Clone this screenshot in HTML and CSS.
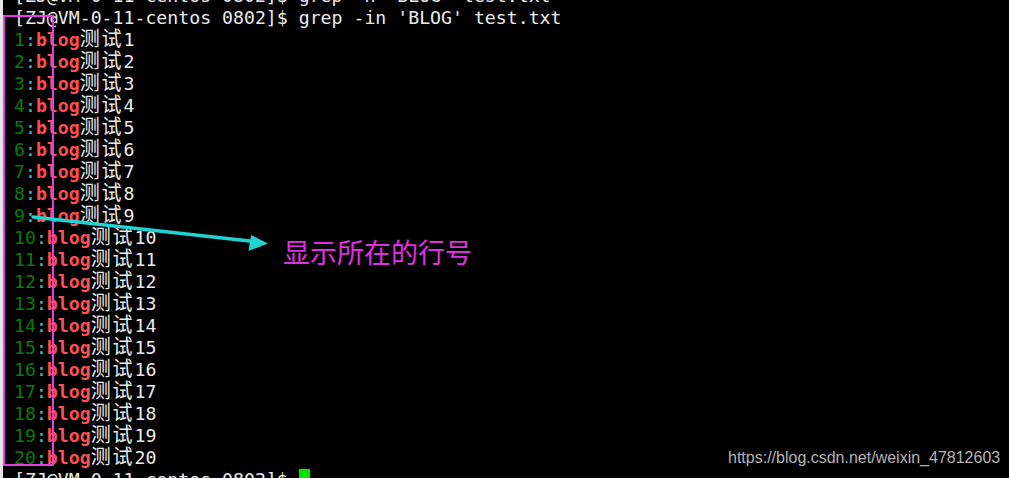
FILE: index.html
```html
<!DOCTYPE html>
<html lang="zh-CN">
<head>
<meta charset="utf-8">
<title>grep -in</title>
<link rel="stylesheet" href="styles.css">
</head>
<body>
<div class="screen">
  <div class="term">
    <div class="line">[ZJ@VM-0-11-centos 0802]$ grep -n 'BLOG' test.txt</div>
    <div class="line">[ZJ@VM-0-11-centos 0802]$ grep -in 'BLOG' test.txt</div>
    <div class="line"><span class="ln">1</span><span class="sep">:</span><span class="hl">blog</span><span class="cjk">测试</span>1</div>
    <div class="line"><span class="ln">2</span><span class="sep">:</span><span class="hl">blog</span><span class="cjk">测试</span>2</div>
    <div class="line"><span class="ln">3</span><span class="sep">:</span><span class="hl">blog</span><span class="cjk">测试</span>3</div>
    <div class="line"><span class="ln">4</span><span class="sep">:</span><span class="hl">blog</span><span class="cjk">测试</span>4</div>
    <div class="line"><span class="ln">5</span><span class="sep">:</span><span class="hl">blog</span><span class="cjk">测试</span>5</div>
    <div class="line"><span class="ln">6</span><span class="sep">:</span><span class="hl">blog</span><span class="cjk">测试</span>6</div>
    <div class="line"><span class="ln">7</span><span class="sep">:</span><span class="hl">blog</span><span class="cjk">测试</span>7</div>
    <div class="line"><span class="ln">8</span><span class="sep">:</span><span class="hl">blog</span><span class="cjk">测试</span>8</div>
    <div class="line"><span class="ln">9</span><span class="sep">:</span><span class="hl">blog</span><span class="cjk">测试</span>9</div>
    <div class="line"><span class="ln">10</span><span class="sep">:</span><span class="hl">blog</span><span class="cjk">测试</span>10</div>
    <div class="line"><span class="ln">11</span><span class="sep">:</span><span class="hl">blog</span><span class="cjk">测试</span>11</div>
    <div class="line"><span class="ln">12</span><span class="sep">:</span><span class="hl">blog</span><span class="cjk">测试</span>12</div>
    <div class="line"><span class="ln">13</span><span class="sep">:</span><span class="hl">blog</span><span class="cjk">测试</span>13</div>
    <div class="line"><span class="ln">14</span><span class="sep">:</span><span class="hl">blog</span><span class="cjk">测试</span>14</div>
    <div class="line"><span class="ln">15</span><span class="sep">:</span><span class="hl">blog</span><span class="cjk">测试</span>15</div>
    <div class="line"><span class="ln">16</span><span class="sep">:</span><span class="hl">blog</span><span class="cjk">测试</span>16</div>
    <div class="line"><span class="ln">17</span><span class="sep">:</span><span class="hl">blog</span><span class="cjk">测试</span>17</div>
    <div class="line"><span class="ln">18</span><span class="sep">:</span><span class="hl">blog</span><span class="cjk">测试</span>18</div>
    <div class="line"><span class="ln">19</span><span class="sep">:</span><span class="hl">blog</span><span class="cjk">测试</span>19</div>
    <div class="line"><span class="ln">20</span><span class="sep">:</span><span class="hl">blog</span><span class="cjk">测试</span>20</div>
    <div class="line">[ZJ@VM-0-11-centos 0802]$ <span class="cursor"></span></div>
  </div>

  <div class="box"></div>
  <svg class="arrow" width="1009" height="478" viewBox="0 0 1009 478">
    <line x1="33" y1="217" x2="254" y2="241.5" stroke="#1fd3d3" stroke-width="3.5" stroke-linecap="round"/>
    <polygon points="268,243.5 251,235 248.5,251" fill="#1fd3d3"/>
  </svg>
  <div class="note">显示所在的行号</div>
  <div class="watermark">https://blog.csdn.net/weixin_47812603</div>
</div>
</body>
</html>
```

FILE: styles.css
```css
html, body {
  margin: 0;
  padding: 0;
  background: #000;
}

.screen {
  position: relative;
  width: 1009px;
  height: 478px;
  overflow: hidden;
  background: #000;
  box-sizing: border-box;
  border-left: 3px solid #e4e4e4;
}

.term {
  margin-top: -15px;
  padding-left: 11px;
  font-family: "DejaVu Sans Mono", "Noto Sans CJK SC", monospace;
  font-size: 18.2px;
  line-height: 22px;
  color: #ececec;
}

.line {
  height: 22px;
  white-space: pre;
}

.ln {
  color: #0b7a0b;
}

.sep {
  color: #2ec6c6;
}

.hl {
  color: #ff4f4f;
  font-weight: bold;
}

.cjk {
  font-family: "Noto Sans CJK SC", sans-serif;
  font-size: 20px;
  line-height: 14px;
  letter-spacing: 1.9px;
}

.cursor {
  display: inline-block;
  width: 1ch;
  height: 22px;
  vertical-align: top;
  background: #00e600;
}

.box {
  position: absolute;
  left: 0;
  top: 15px;
  width: 51px;
  height: 451px;
  box-sizing: border-box;
  border: 2px solid #e63ce6;
}

.arrow {
  position: absolute;
  left: -3px;
  top: 0;
}

.note {
  position: absolute;
  left: 280px;
  top: 236px;
  font-family: "Noto Sans CJK SC", sans-serif;
  font-size: 27px;
  line-height: 32px;
  color: #e030e0;
}

.watermark {
  position: absolute;
  left: 725px;
  top: 449px;
  font-family: "Liberation Sans", Arial, sans-serif;
  font-size: 16px;
  color: #b4b4b4;
}
```
